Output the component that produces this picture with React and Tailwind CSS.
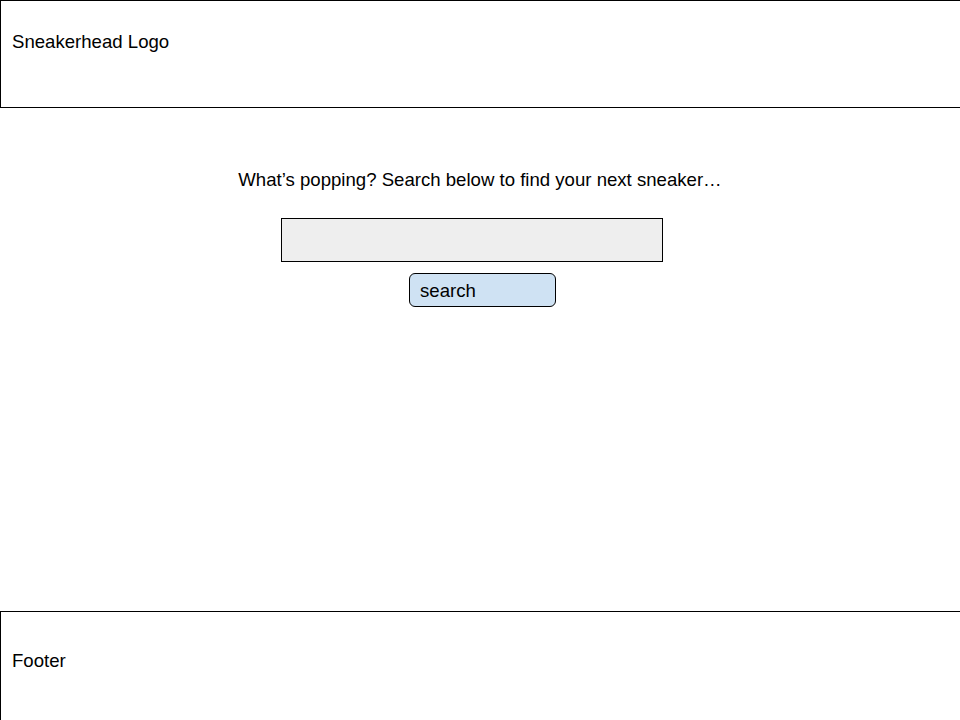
export default function App() {
  return (
    <div className="flex flex-col h-[720px] w-[960px] overflow-hidden bg-white text-black" style={{ fontFamily: '"Liberation Sans", Arial, sans-serif' }}>
      <header className="h-[108px] w-[980px] shrink-0 border-t border-l border-b border-black pl-[11px] pt-[30px]">
        <div className="text-[18.6px] leading-[21px]">Sneakerhead Logo</div>
      </header>
      <main className="flex flex-col items-center pt-[61px]">
        <p className="text-[18.6px] leading-[21px]">What’s popping? Search below to find your next sneaker…</p>
        <div className="mt-[28px] mr-[17px] h-[44px] w-[382px] border border-black bg-[#eeeeee]" />
        <button className="mt-[11px] ml-[5px] h-[34px] w-[147px] rounded-[6px] border border-black bg-[#cfe2f3] pl-[10px] text-left text-[18.6px] leading-[21px]">search</button>
      </main>
      <footer className="mt-auto h-[109px] w-[980px] shrink-0 border-t border-l border-black pl-[11px] pt-[38px]">
        <div className="text-[18.6px] leading-[21px]">Footer</div>
      </footer>
    </div>
  );
}
